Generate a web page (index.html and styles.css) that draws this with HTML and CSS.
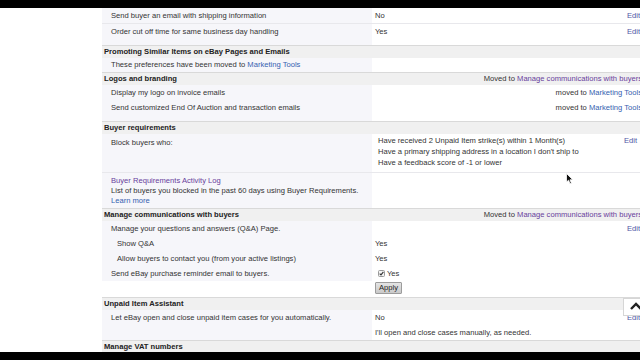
FILE: index.html
```html
<!DOCTYPE html>
<html>
<head>
    <title>Selling Preferences</title>
    <link rel="stylesheet" href="styles.css">
</head>
<body>
    <div class="screen">
        <div class="letterbox"></div>
        <div class="viewport">
            <div class="prefs">
                <div class="group">
                    <div class="row">
                        <div class="label">Send buyer an email with shipping information</div>
                        <div class="value"><span>No</span><a class="edit" href="#">Edit</a></div>
                    </div>
                    <div class="row line last">
                        <div class="label">Order cut off time for same business day handling</div>
                        <div class="value"><span>Yes</span><a class="edit" href="#">Edit</a></div>
                    </div>
                </div>

                <div class="group">
                    <div class="heading"><span>Promoting Similar Items on eBay Pages and Emails</span></div>
                    <div class="row short">
                        <div class="label">These preferences have been moved to <a class="link" href="#">Marketing Tools</a></div>
                        <div class="value"></div>
                    </div>
                </div>

                <div class="group">
                    <div class="heading">
                        <span>Logos and branding</span>
                        <span class="moved">Moved to <a class="visited" href="#">Manage communications with buyers</a></span>
                    </div>
                    <div class="row">
                        <div class="label">Display my logo on invoice emails</div>
                        <div class="value right">moved to&nbsp;<a class="link" href="#">Marketing Tools</a></div>
                    </div>
                    <div class="row last">
                        <div class="label">Send customized End Of Auction and transaction emails</div>
                        <div class="value right">moved to&nbsp;<a class="link" href="#">Marketing Tools</a></div>
                    </div>
                </div>

                <div class="group">
                    <div class="heading"><span>Buyer requirements</span></div>
                    <div class="row block">
                        <div class="label">Block buyers who:</div>
                        <div class="value">
                            <ul class="rules">
                                <li>Have received 2 Unpaid Item strike(s) within 1 Month(s)</li>
                                <li>Have a primary shipping address in a location I don't ship to</li>
                                <li>Have a feedback score of -1 or lower</li>
                            </ul>
                            <a class="edit inset" href="#">Edit</a>
                        </div>
                    </div>
                    <div class="row line log">
                        <div class="label">
                            <a class="visited" href="#">Buyer Requirements Activity Log</a><br>
                            List of buyers you blocked in the past 60 days using Buyer Requirements.<br>
                            <a class="link" href="#">Learn more</a>
                        </div>
                        <div class="value"></div>
                    </div>
                </div>

                <div class="group">
                    <div class="heading">
                        <span>Manage communications with buyers</span>
                        <span class="moved">Moved to <a class="visited" href="#">Manage communications with buyers</a></span>
                    </div>
                    <div class="row">
                        <div class="label">Manage your questions and answers (Q&amp;A) Page.</div>
                        <div class="value"><span></span><a class="edit" href="#">Edit</a></div>
                    </div>
                    <div class="row">
                        <div class="label sub">Show Q&amp;A</div>
                        <div class="value"><span>Yes</span></div>
                    </div>
                    <div class="row">
                        <div class="label sub">Allow buyers to contact you (from your active listings)</div>
                        <div class="value"><span>Yes</span></div>
                    </div>
                    <div class="row">
                        <div class="label">Send eBay purchase reminder email to buyers.</div>
                        <div class="value">
                            <label class="check">
                                <svg width="7" height="7" viewBox="0 0 7 7">
                                    <rect x="0.5" y="0.5" width="6" height="6" rx="1" fill="#f4f4f4" stroke="#9a9a9a"/>
                                    <path d="M1.7 3.6 L3 4.9 L5.4 1.9" fill="none" stroke="#333" stroke-width="1.1"/>
                                </svg>
                                Yes
                            </label>
                        </div>
                    </div>
                    <div class="row apply-row">
                        <div class="label plain"></div>
                        <div class="value"><button class="btn" type="button">Apply</button></div>
                    </div>
                </div>

                <div class="group">
                    <div class="heading"><span>Unpaid Item Assistant</span></div>
                    <div class="row tall">
                        <div class="label">Let eBay open and close unpaid item cases for you automatically.</div>
                        <div class="value">
                            <div>
                                <div>No</div>
                                <div>I'll open and close cases manually, as needed.</div>
                            </div>
                            <a class="edit" href="#">Edit</a>
                        </div>
                    </div>
                </div>

                <div class="group">
                    <div class="heading"><span>Manage VAT numbers</span></div>
                    <div class="row">
                        <div class="label">Add or edit your VAT number</div>
                        <div class="value"></div>
                    </div>
                </div>
            </div>

            <div class="to-top">
                <svg width="14" height="10" viewBox="0 0 14 10">
                    <path d="M3 8 L8 3 L13 8" fill="none" stroke="#222" stroke-width="2.4"/>
                </svg>
            </div>

            <svg class="pointer" width="8" height="12" viewBox="0 0 8 12">
                <path d="M0.5 0.5 L0.5 9 L2.6 7.2 L4 10.8 L5.4 10.2 L4 6.8 L6.8 6.8 Z" fill="#111" stroke="#fff" stroke-width="0.8"/>
            </svg>
        </div>
        <div class="letterbox"></div>
    </div>
</body>
</html>
```

FILE: styles.css
```css
body {
    margin: 0;
    padding: 0;
    background: #000;
    font-family: "Liberation Sans", Arial, sans-serif;
    font-size: 7.6px;
    color: #333;
}

.screen {
    width: 640px;
    height: 360px;
    overflow: hidden;
    display: flex;
    flex-direction: column;
}

.letterbox {
    height: 8px;
    flex: none;
    background: #000;
}

.viewport {
    position: relative;
    height: 344px;
    flex: none;
    overflow: hidden;
    background: #fff;
}

.prefs {
    margin-left: 102px;
    width: 540px;
}

a {
    text-decoration: none;
}

.link {
    color: #3561b0;
}

.visited {
    color: #68409c;
}

.heading {
    display: flex;
    justify-content: space-between;
    height: 12px;
    line-height: 12px;
    padding-left: 2px;
    border-top: 1px solid #d9d9d9;
    background-color: #f0f0f0;
    font-weight: bold;
    color: #222;
}

.moved {
    font-weight: normal;
    color: #333;
}

.row {
    display: flex;
    line-height: 15px;
}

.row.line {
    border-top: 1px solid #e8e8ec;
}

.row.last .label,
.row.last .value {
    padding-bottom: 6px;
}

.row.short {
    line-height: 14px;
}

.label {
    width: 270px;
    flex: none;
    box-sizing: border-box;
    padding-left: 9px;
    background-color: #f6f6fa;
}

.label.sub {
    padding-left: 15px;
}

.label.plain {
    background-color: #fff;
}

.value {
    flex: 1;
    display: flex;
    justify-content: space-between;
    padding-left: 3px;
    background-color: #fff;
}

.value.right {
    justify-content: flex-end;
}

.edit {
    color: #4f57a6;
    padding-right: 2px;
}

.edit.inset {
    padding-right: 5px;
}

.row.block .label {
    padding-top: 1px;
    padding-bottom: 7px;
}

.row.block .value {
    padding-left: 6px;
    padding-top: 1px;
    padding-bottom: 4px;
    line-height: 11px;
}

.row.block .edit {
    line-height: 12px;
}

.rules {
    list-style: none;
    margin: 0;
    padding: 0;
}

.row.log .label {
    line-height: 10px;
    padding-top: 3px;
    padding-bottom: 2px;
}

.check {
    display: flex;
    align-items: center;
    gap: 2px;
    padding-left: 3px;
}

.apply-row {
    height: 16px;
}

.btn {
    height: 12px;
    margin-top: 1px;
    padding: 0 3px;
    font-family: inherit;
    font-size: 7.6px;
    line-height: 10px;
    color: #222;
    background: linear-gradient(#e4e4e4, #c9c9c9);
    border: 1px solid #9c9c9c;
    border-radius: 1px;
}

.row.tall .value {
    padding-left: 3px;
}

.to-top {
    position: absolute;
    left: 623px;
    top: 290px;
    width: 19px;
    height: 18px;
    box-sizing: border-box;
    border: 1px solid #d6d6d6;
    border-right: none;
    background: #fff;
    display: flex;
    justify-content: flex-end;
    padding-top: 2px;
}

.pointer {
    position: absolute;
    left: 566px;
    top: 165px;
}
```
